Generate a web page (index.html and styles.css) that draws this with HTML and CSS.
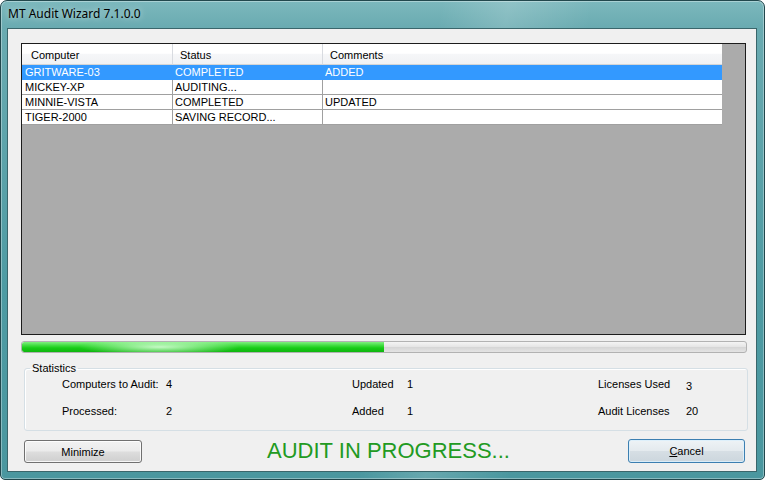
FILE: index.html
```html
<!DOCTYPE html>
<html lang="en">
<head>
<meta charset="utf-8">
<title>MT Audit Wizard 7.1.0.0</title>
<link rel="stylesheet" href="styles.css">
</head>
<body>
<div class="window">
  <div class="titlebar"><span class="title">MT Audit Wizard 7.1.0.0</span></div>

  <div class="client">
    <div class="listview">
      <div class="lv-row lv-header">
        <div class="lv-cell">Computer</div>
        <div class="lv-cell">Status</div>
        <div class="lv-cell">Comments</div>
      </div>
      <div class="lv-row is-selected">
        <div class="lv-cell">GRITWARE-03</div>
        <div class="lv-cell">COMPLETED</div>
        <div class="lv-cell">ADDED</div>
      </div>
      <div class="lv-row">
        <div class="lv-cell">MICKEY-XP</div>
        <div class="lv-cell">AUDITING...</div>
        <div class="lv-cell"></div>
      </div>
      <div class="lv-row">
        <div class="lv-cell">MINNIE-VISTA</div>
        <div class="lv-cell">COMPLETED</div>
        <div class="lv-cell">UPDATED</div>
      </div>
      <div class="lv-row">
        <div class="lv-cell">TIGER-2000</div>
        <div class="lv-cell">SAVING RECORD...</div>
        <div class="lv-cell"></div>
      </div>
    </div>

    <div class="progress"><div class="progress-fill" style="width: 50%"></div></div>

    <fieldset class="stats">
      <legend>Statistics</legend>
      <div class="stats-grid">
        <span>Computers to Audit:</span><span>4</span>
        <span>Updated</span><span>1</span>
        <span>Licenses Used</span><span class="stat-low">3</span>

        <span>Processed:</span><span>2</span>
        <span>Added</span><span>1</span>
        <span>Audit Licenses</span><span>20</span>
      </div>
    </fieldset>

    <div class="footer">
      <button class="btn btn-minimize" type="button">Minimize</button>
      <div class="status-text">AUDIT IN PROGRESS...</div>
      <button class="btn btn-default" type="button"><span class="accel">C</span>ancel</button>
    </div>
  </div>
</div>
</body>
</html>
```

FILE: styles.css
```css
* {
  box-sizing: border-box;
}

html,
body {
  margin: 0;
  padding: 0;
}

body {
  width: 765px;
  height: 480px;
  overflow: hidden;
  background: #ffffff;
  font-family: "Liberation Sans", Arial, sans-serif;
  font-size: 11px;
  color: #000;
}

/* Aero-basic style window frame */
.window {
  width: 765px;
  height: 480px;
  display: flex;
  flex-direction: column;
  padding: 0 7px 7px 6px;
  border: 1px solid #22484d;
  border-radius: 7px 7px 5px 5px;
  background:
    linear-gradient(100deg, rgba(255, 255, 255, 0) 52%, rgba(255, 255, 255, 0.16) 60%, rgba(255, 255, 255, 0) 70%),
    linear-gradient(to bottom, #7cb8bd 0, #6aabb1 26px, #4e9ba3 60%, #4a979f 100%);
  box-shadow: inset 0 0 0 1px rgba(255, 255, 255, 0.35);
}

.titlebar {
  height: 27px;
  padding: 5px 0 0 1px;
  flex: none;
}

.title {
  font-family: "Noto Sans", "Open Sans", sans-serif;
  font-size: 12px;
  line-height: 16px;
  color: #000;
  text-shadow: 0 0 6px rgba(255, 255, 255, 0.7);
}

/* Dialog client area */
.client {
  flex: 1;
  display: flex;
  flex-direction: column;
  background: #f0f0f0;
  border: 1px solid #3a666b;
  padding: 14px 0 8px 13px;
}

/* List view */
.listview {
  width: 725px;
  height: 292px;
  flex: none;
  border: 1px solid #1c1c1c;
  background: #ababab;
}

.lv-row {
  display: grid;
  grid-template-columns: 151px 150px 399px;
  width: 700px;
  background: #ffffff;
}

.lv-cell {
  height: 15px;
  line-height: 14px;
  padding: 0 2px;
  border-right: 1px solid #a0a0a0;
  border-bottom: 1px solid #a0a0a0;
  white-space: nowrap;
  overflow: hidden;
}

.lv-cell:first-child {
  padding-left: 3px;
}

.lv-cell:last-child {
  border-right: none;
}

.lv-header {
  background: linear-gradient(to bottom, #ffffff 0%, #ffffff 45%, #f6f7f9 46%, #f0f1f3 100%);
}

.lv-header .lv-cell {
  height: 21px;
  line-height: 13px;
  padding: 5px 0 0 7px;
  border-right-color: #d8dbe0;
  border-bottom-color: #d5d5d5;
}

.lv-header .lv-cell:first-child {
  padding-left: 9px;
}

.lv-row.is-selected {
  background: #3399ff;
  color: #ffffff;
}

.lv-row.is-selected .lv-cell {
  border-color: #3399ff;
}

/* Progress bar */
.progress {
  width: 726px;
  height: 12px;
  margin-top: 6px;
  flex: none;
  border: 1px solid #b2b2b2;
  border-radius: 3px;
  overflow: hidden;
  background: linear-gradient(to bottom, #f4f4f4 0%, #e6e6e6 45%, #d6d6d6 55%, #e4e4e4 100%);
}

.progress-fill {
  height: 100%;
  border-radius: 2px 0 0 2px;
  background:
    radial-gradient(ellipse 80px 8px at 38% 50%, rgba(225, 255, 225, 0.85), rgba(225, 255, 225, 0) 100%),
    linear-gradient(to bottom, #7ff07f 0%, #3fdc3f 35%, #17cc17 60%, #10b510 100%);
}

/* Statistics group box */
.stats {
  width: 724px;
  height: 69px;
  margin: 9px 0 0 3px;
  padding: 0;
  min-width: 0;
  flex: none;
  border: 1px solid #d5dfe5;
  border-radius: 3px;
  box-shadow: inset 1px 1px 0 #ffffff;
}

.stats legend {
  margin-left: 5px;
  padding: 0 2px;
  line-height: 13px;
}

.stats-grid {
  display: grid;
  grid-template-columns: 104px 186px 55px 191px 88px auto;
  row-gap: 14px;
  padding: 3px 0 0 37px;
  line-height: 13px;
}

.stat-low {
  position: relative;
  top: 2px;
}

/* Bottom button row */
.footer {
  display: flex;
  align-items: flex-end;
  width: 721px;
  height: 24px;
  margin: 8px 0 0 3px;
  flex: none;
}

.btn {
  font-family: "Liberation Sans", Arial, sans-serif;
  font-size: 11px;
  color: #000;
  padding: 0;
  border: 1px solid #707070;
  border-radius: 3px;
  background: linear-gradient(to bottom, #f2f2f2 0%, #ebebeb 48%, #dddddd 52%, #cfcfcf 100%);
  box-shadow: inset 0 0 0 1px rgba(255, 255, 255, 0.8);
}

.btn-minimize {
  width: 118px;
  height: 23px;
}

.btn-default {
  width: 117px;
  height: 24px;
  border-color: #3c7fb1;
  background: linear-gradient(to bottom, #eef3f6 0%, #e4eaee 48%, #d6dee4 52%, #ccd6dd 100%);
  box-shadow: inset 0 0 0 1px rgba(220, 240, 252, 0.9);
}

.accel {
  text-decoration: underline;
}

.status-text {
  flex: 1;
  align-self: center;
  padding: 0 0 2px 7px;
  text-align: center;
  font-size: 22px;
  line-height: 25px;
  color: #229a22;
  white-space: nowrap;
}
```
